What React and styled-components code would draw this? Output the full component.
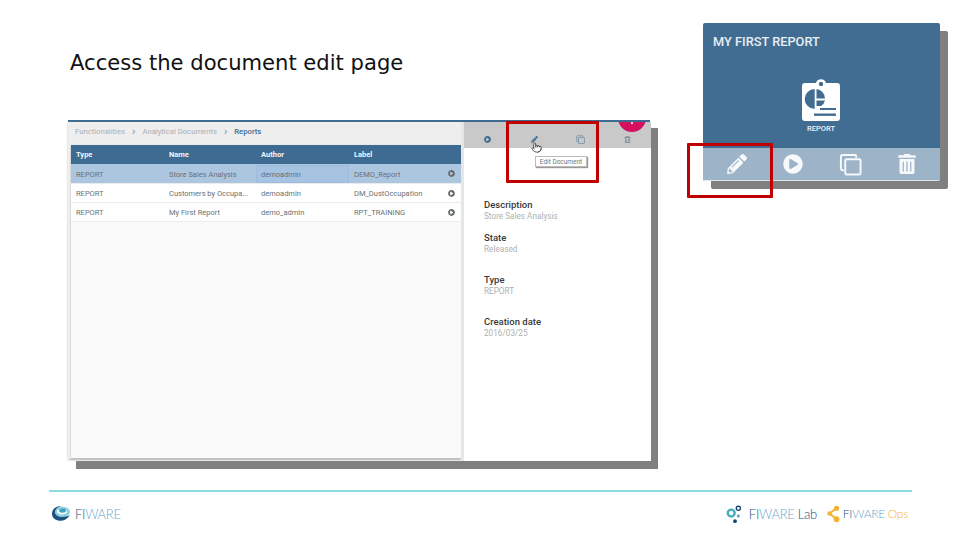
import React from 'react';
import styled, { createGlobalStyle } from 'styled-components';
import { FaPencilAlt, FaPlayCircle, FaTrashAlt, FaRegTrashAlt } from 'react-icons/fa';
import { Pointer } from 'lucide-react';

const GlobalStyle = createGlobalStyle`
  html, body {
    margin: 0;
    background: #fff;
  }
`;

const Slide = styled.div`
  position: relative;
  width: 960px;
  height: 540px;
  overflow: hidden;
  background: #fff;
  font-family: Roboto, "Liberation Sans", sans-serif;
  display: flex;
  flex-direction: column;
`;

const Content = styled.div`
  display: flex;
  flex: 0 0 490px;
  padding-left: 68px;
  box-sizing: border-box;
`;

const MainColumn = styled.div`
  width: 582px;
`;

const Title = styled.h1`
  margin: 0;
  padding: 50px 0 0 2px;
  height: 120px;
  box-sizing: border-box;
  font-family: "DejaVu Sans", sans-serif;
  font-weight: 400;
  font-size: 21.1px;
  line-height: 26px;
  color: #111;
`;

const Shot = styled.div`
  position: relative;
  display: flex;
  width: 582px;
  height: 341px;
  box-sizing: border-box;
  border-top: 2px solid #3d6b91;
  background: #fff;
  box-shadow: 8px 8px 0 #808080;
`;

const ListPanel = styled.div`
  width: 393px;
  height: 337px;
  padding: 0 3px;
  box-sizing: border-box;
  background: #f1f1f1;
  box-shadow: 0 1px 2px #bbb;
`;

const Crumbs = styled.div`
  display: flex;
  align-items: center;
  gap: 7px;
  height: 23px;
  margin: 0 -3px;
  padding: 0 7px 4px;
  box-sizing: border-box;
  font-size: 7.7px;
  color: #a3a9ae;
  background: #eee;
`;

const Crumb = styled.span`
  color: ${(p) => (p.$current ? '#3d6b91' : '#a9aeb3')};
  font-weight: ${(p) => (p.$current ? 500 : 400)};
`;

const CrumbSep = styled.span`
  color: #7d93a6;
  font-size: 11px;
  line-height: 8px;
  font-weight: 500;
`;

const Table = styled.div`
  height: 313px;
  width: 390px;
  background: #fafafa;
  box-shadow: 0 1px 2px #aaa;
`;

const Row = styled.div`
  display: grid;
  grid-template-columns: 93px 92px 93px 1fr;
  height: ${(p) => (p.$head ? 19 : p.$selected ? 20 : 19)}px;
  padding-top: ${(p) => (p.$head ? 0 : 1)}px;
  background: ${(p) => (p.$head ? '#3d6b91' : p.$selected ? '#adc6e0' : '#fff')};
  border-bottom: ${(p) => (p.$head ? 'none' : '1px solid #ececec')};
  box-sizing: border-box;
  font-size: 7.5px;
  color: ${(p) => (p.$head ? '#f2f6f9' : '#6a7074')};
  font-weight: ${(p) => (p.$head ? 700 : 400)};
`;

const Cell = styled.div`
  position: relative;
  display: flex;
  align-items: center;
  padding-left: 5px;
  white-space: nowrap;
  ${(p) => p.$focus && 'box-shadow: inset 0 0 0 1px #9dbbdb; background: #a7c3e2;'}
`;

const RowAction = styled(FaPlayCircle)`
  position: absolute;
  right: 6px;
  top: 5px;
  width: 7px;
  height: 7px;
  color: #646a6e;
`;

const DetailPanel = styled.div`
  flex: 1;
  border-left: 3px solid #e6e6e6;
  background: #fff;
`;

const DetailBar = styled.div`
  display: flex;
  align-items: center;
  height: 26px;
  padding: 8px 0 0 0.5px;
  box-sizing: border-box;
  background: #c9c9c9;
`;

const BarSlot = styled.div`
  width: 46.6px;
  display: flex;
  justify-content: center;
  color: ${(p) => p.$color};
  font-size: 7px;
`;

const DetailBody = styled.div`
  padding: 51px 0 0 20px;
`;

const Field = styled.div`
  height: ${(p) => p.$height}px;
`;

const FieldLabel = styled.div`
  font-size: 9.5px;
  line-height: 12px;
  font-weight: 500;
  color: #3a3a3a;
`;

const FieldValue = styled.div`
  font-size: 8.2px;
  line-height: 11px;
  color: #b0b0b0;
`;

const Fab = styled.div`
  position: absolute;
  right: 4px;
  top: -18px;
  width: 28px;
  height: 28px;
  border-radius: 50%;
  background: #d5105f;
`;

const ShotClip = styled.div`
  position: absolute;
  left: 0;
  top: 0;
  right: 0;
  height: 26px;
  overflow: hidden;
`;

const FabPlus = styled.div`
  position: absolute;
  left: 13px;
  top: 16px;
  width: 2px;
  height: 4px;
  background: #f7d7e4;
`;

const Tooltip = styled.div`
  position: absolute;
  left: 467px;
  top: 34px;
  width: 52px;
  height: 11px;
  display: flex;
  align-items: center;
  justify-content: center;
  background: #fff;
  border: 1px solid #bbb;
  box-sizing: border-box;
  box-shadow: 1px 1px 1px #999;
  font-size: 6.5px;
  color: #777;
  white-space: nowrap;
`;

const HandCursor = styled(Pointer)`
  position: absolute;
  left: 463px;
  top: 19px;
  width: 11px;
  height: 13px;
  color: #222;
  fill: #fff;
`;

const RedBox = styled.div`
  position: absolute;
  box-sizing: border-box;
  border: 3px solid #c00000;
  border-radius: 1px;
  left: ${(p) => p.$x}px;
  top: ${(p) => p.$y}px;
  width: ${(p) => p.$w}px;
  height: ${(p) => p.$h}px;
`;

const CardColumn = styled.div`
  padding: 23px 0 0 53px;
`;

const Card = styled.div`
  width: 237px;
  height: 158px;
  display: flex;
  flex-direction: column;
  border-radius: 2px;
  background: #426d92;
  box-shadow: 8px 8px 0 #808080;
`;

const CardTitle = styled.div`
  padding: 11px 0 0 10px;
  height: 29px;
  box-sizing: border-box;
  font-size: 12.8px;
  line-height: 15px;
  font-weight: 500;
  color: #e8eef3;
`;

const CardBody = styled.div`
  flex: 1;
  display: flex;
  flex-direction: column;
  align-items: center;
  padding: 27px 0 0 0;
  box-sizing: border-box;
  margin-left: -1px;
`;

const CardType = styled.div`
  margin-top: 3px;
  font-size: 7.5px;
  font-weight: 500;
  color: #eef2f5;
`;

const CardBar = styled.div`
  display: flex;
  align-items: center;
  height: 33px;
  padding-left: 5px;
  background: #9db3c8;
  border-bottom: 1px solid #dfe6ec;
  box-sizing: border-box;
  border-radius: 0 0 2px 2px;
`;

const CardAction = styled.div`
  width: 57px;
  display: flex;
  justify-content: center;
  color: #f6f8fa;
  margin-left: ${(p) => p.$nudge || 0}px;
`;

const Footer = styled.div`
  flex: 0 0 50px;
  margin: 0 48px 0 49px;
  box-sizing: border-box;
  border-top: 2px solid #8cdbe0;
  display: flex;
  align-items: center;
  justify-content: space-between;
  padding: 0 4px 5px 2px;
`;

const LogoGroup = styled.div`
  display: flex;
  align-items: center;
  gap: ${(p) => p.$gap || 4}px;
`;

const Wordmark = styled.span`
  font-family: Lato, "Liberation Sans", sans-serif;
  font-size: ${(p) => p.$size || 13}px;
  font-weight: 300;
  letter-spacing: -0.3px;
  white-space: nowrap;
  color: #24527a;
`;

const LightPart = styled.span`
  color: ${(p) => p.$color || '#6aa7c9'};
`;

function CopyIcon({ size, weight = 2 }) {
  return <svg width={size} height={size} viewBox="0 0 24 24" fill="none" stroke="currentColor" strokeWidth={weight}>
    <path d="M5 18 H3.5 A1.5 1.5 0 0 1 2 16.5 V3.5 A1.5 1.5 0 0 1 3.5 2 H16.5 A1.5 1.5 0 0 1 18 3.5 V5" />
    <rect x="6.5" y="6.5" width="16" height="16" rx="1.5" />
  </svg>;
}

function ReportIcon() {
  return <svg width="38" height="42" viewBox="0 0 38 42">
    <path fill="#fff" d="M3 4 H14 A5.2 5.2 0 0 1 24 4 H35 A3 3 0 0 1 38 7 V39 A3 3 0 0 1 35 42 H3 A3 3 0 0 1 0 39 V7 A3 3 0 0 1 3 4 Z" />
    <circle cx="19" cy="5" r="2.2" fill="#426d92" />
    <path fill="#426d92" d="M12.7 10 A10 10 0 0 0 12.7 30 Z" />
    <path fill="#426d92" d="M14.5 10 A9.5 10 0 0 1 23 19.5 H14.5 Z" />
    <path fill="#426d92" d="M14.5 21.5 H23 A9.5 9 0 0 1 19 27 H14.5 Z" />
    <rect x="18" y="29" width="16" height="2" fill="#426d92" />
    <rect x="12" y="34.5" width="22" height="2.4" fill="#426d92" />
  </svg>;
}

function FiwareMark() {
  return <svg width="20" height="18" viewBox="0 0 20 18">
    <ellipse cx="10.5" cy="7" rx="8.5" ry="5.5" fill="#8fd0e0" />
    <path fill="#1f4f7c" d="M1 9 C1 3 6 1 10 1 C6 2 3.5 5 4 8 C5 12 12 13.5 19 10 C16 15 11 16.5 7 15.5 C3 14.5 1 12 1 9 Z" />
    <ellipse cx="11" cy="6.5" rx="5" ry="3" fill="#fff" />
    <ellipse cx="11.5" cy="5.5" rx="3.5" ry="2.2" fill="#3ca7c4" />
  </svg>;
}

function LabMark() {
  return <svg width="19" height="20" viewBox="0 0 20 20">
    <circle cx="5.5" cy="9" r="3.6" fill="none" stroke="#45aebd" strokeWidth="2.6" />
    <circle cx="13" cy="4" r="2.2" fill="none" stroke="#17466e" strokeWidth="1.4" />
    <circle cx="13" cy="12" r="1.6" fill="#45aebd" />
    <circle cx="9.5" cy="17.5" r="2" fill="#17466e" />
  </svg>;
}

function OpsMark() {
  return <svg width="13" height="20" viewBox="0 0 15 20">
    <path d="M3 9.5 L11 3 M3 9.5 L11 16" stroke="#f5b335" strokeWidth="2.4" />
    <circle cx="3" cy="9.5" r="2.6" fill="#f5b335" />
    <circle cx="11" cy="3.5" r="3" fill="#f5b335" />
    <circle cx="11" cy="16" r="3.4" fill="#f5b335" />
  </svg>;
}

const rows = [
  { type: 'REPORT', name: 'Store Sales Analysis', author: 'demoadmin', label: 'DEMO_Report', selected: true },
  { type: 'REPORT', name: 'Customers by Occupa...', author: 'demoadmin', label: 'DM_DustOccupation' },
  { type: 'REPORT', name: 'My First Report', author: 'demo_admin', label: 'RPT_TRAINING' },
];

const fields = [
  { label: 'Description', value: 'Store Sales Analysis', height: 33 },
  { label: 'State', value: 'Released', height: 42 },
  { label: 'Type', value: 'REPORT', height: 42 },
  { label: 'Creation date', value: '2016/03/25', height: 30 },
];

export default function App() {
  return <Slide>
    <GlobalStyle />
    <Content>
      <MainColumn>
        <Title>Access the document edit page</Title>
        <Shot>
          <ListPanel>
            <Crumbs>
              <Crumb>Functionalities</Crumb>
              <CrumbSep>›</CrumbSep>
              <Crumb>Analytical Documents</Crumb>
              <CrumbSep>›</CrumbSep>
              <Crumb $current>Reports</Crumb>
            </Crumbs>
            <Table>
              <Row $head>
                <Cell>Type</Cell>
                <Cell>Name</Cell>
                <Cell>Author</Cell>
                <Cell>Label</Cell>
              </Row>
              {rows.map((row) =>
                <Row key={row.name} $selected={row.selected}>
                  <Cell>{row.type}</Cell>
                  <Cell>{row.name}</Cell>
                  <Cell $focus={row.selected}>{row.author}</Cell>
                  <Cell>{row.label}<RowAction /></Cell>
                </Row>
              )}
            </Table>
          </ListPanel>
          <DetailPanel>
            <DetailBar>
              <BarSlot $color="#3d6b91"><FaPlayCircle /></BarSlot>
              <BarSlot $color="#3d6b91"><FaPencilAlt /></BarSlot>
              <BarSlot $color="#6f8ba1"><CopyIcon size={9} /></BarSlot>
              <BarSlot $color="#76848f"><FaRegTrashAlt /></BarSlot>
            </DetailBar>
            <DetailBody>
              {fields.map((field) =>
                <Field key={field.label} $height={field.height}>
                  <FieldLabel>{field.label}</FieldLabel>
                  <FieldValue>{field.value}</FieldValue>
                </Field>
              )}
            </DetailBody>
          </DetailPanel>
          <ShotClip><Fab><FabPlus /></Fab></ShotClip>
          <HandCursor strokeWidth={1.6} />
          <Tooltip>Edit Document</Tooltip>
        </Shot>
      </MainColumn>
      <CardColumn>
        <Card>
          <CardTitle>MY FIRST REPORT</CardTitle>
          <CardBody>
            <ReportIcon />
            <CardType>REPORT</CardType>
          </CardBody>
          <CardBar>
            <CardAction><FaPencilAlt size={20} /></CardAction>
            <CardAction $nudge={-1}><FaPlayCircle size={20} /></CardAction>
            <CardAction $nudge={1}><CopyIcon size={23} /></CardAction>
            <CardAction $nudge={-1}><FaTrashAlt size={20} /></CardAction>
          </CardBar>
        </Card>
      </CardColumn>
    </Content>
    <Footer>
      <LogoGroup>
        <FiwareMark />
        <Wordmark>FI<LightPart>WARE</LightPart></Wordmark>
      </LogoGroup>
      <LogoGroup $gap={10}>
        <LogoGroup>
          <LabMark />
          <Wordmark>FI<LightPart>WARE</LightPart> Lab</Wordmark>
        </LogoGroup>
        <LogoGroup $gap={3}>
          <OpsMark />
          <Wordmark $size={12}>FI<LightPart>WARE</LightPart> <LightPart $color="#f5b335">Ops</LightPart></Wordmark>
        </LogoGroup>
      </LogoGroup>
    </Footer>
    <RedBox $x={506} $y={121} $w={93} $h={62} />
    <RedBox $x={687} $y={143} $w={86} $h={55} />
  </Slide>;
}
